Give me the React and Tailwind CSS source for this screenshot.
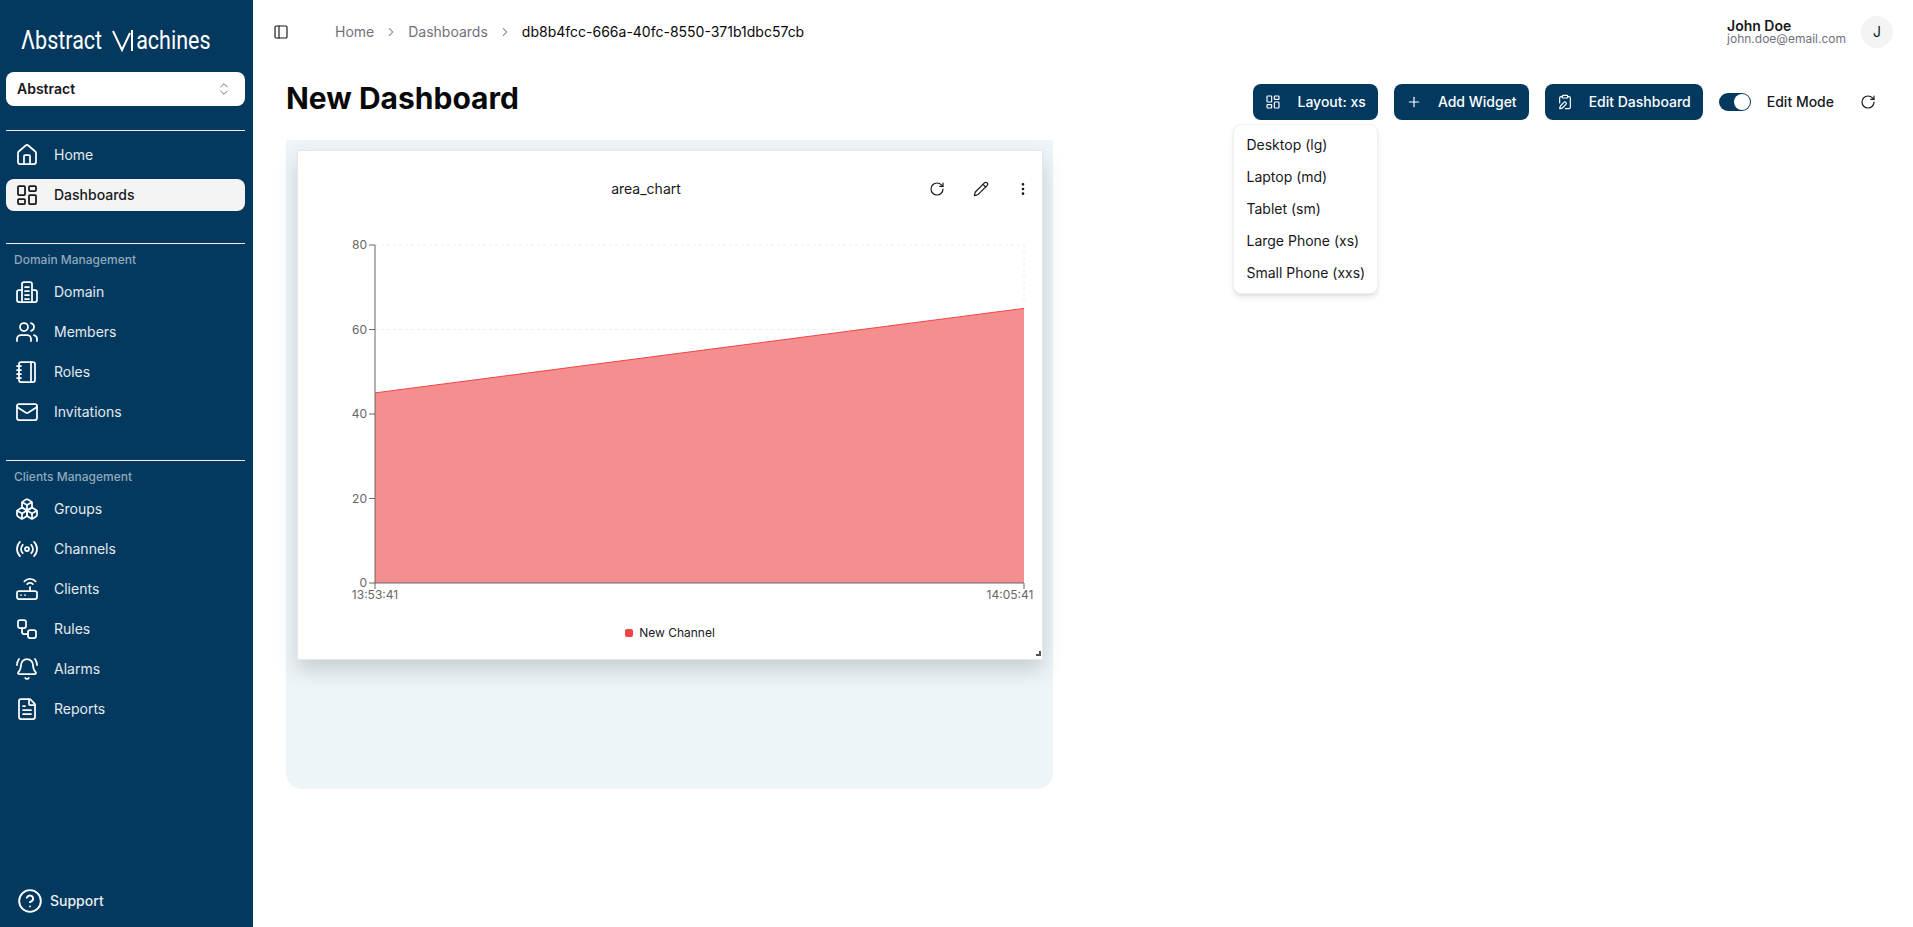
import React from 'react';
import {
  House, LayoutDashboard, Users, Notebook, Mail, Boxes, Radio, Router, Workflow, BellRing, FileText,
  CircleHelp, ChevronsUpDown, ChevronRight, PanelLeft, Plus, ClipboardPen, RotateCw, Pencil, EllipsisVertical,
} from 'lucide-react';

const font = { fontFamily: 'Inter, sans-serif' };

function BuildingIcon(props) {
  return (
    <svg viewBox="0 0 24 24" fill="none" stroke="currentColor" strokeWidth="2" strokeLinecap="round" strokeLinejoin="round" {...props}>
      <path d="M7 22V4a2 2 0 0 1 2-2h6a2 2 0 0 1 2 2v18" />
      <path d="M7 10H4a2 2 0 0 0-2 2v8a2 2 0 0 0 2 2h16a2 2 0 0 0 2-2v-8a2 2 0 0 0-2-2h-3" />
      <path d="M10 7h4M10 11h4M10 15h4M10 19h4" />
    </svg>
  );
}

function NavItem({ icon: Icon, label, active }) {
  return (
    <div className={`flex h-8 items-center gap-[15px] rounded-lg pl-[9px] text-sm ${active ? 'bg-[#f4f4f5] font-medium text-[#18181b]' : 'text-[#e4e9ee]'}`}>
      <Icon className={`h-6 w-6 shrink-0 ${active ? 'text-[#18181b]' : 'text-white'}`} strokeWidth={1.75} />
      <span>{label}</span>
    </div>
  );
}

function NavGroup({ label, items }) {
  return (
    <div className={`mb-8 border-t border-[#e8edf1] ${label ? '' : 'pt-2'}`}>
      {label && <div className="flex h-8 items-center px-2 text-xs font-medium text-[#8fa8bb]">{label}</div>}
      <div className="flex flex-col gap-2">
        {items.map((i) => <NavItem key={i.label} {...i} />)}
      </div>
    </div>
  );
}

function Logo() {
  return (
    <div className="flex h-[72px] items-center pl-[15px] pt-[10px] text-[21.5px] leading-none text-white" style={{ fontFamily: 'Roboto, sans-serif' }}>
      <span className="scale-y-[1.2]">Λbstract</span>
      <svg className="ml-[10px] h-[22px] w-[22px]" viewBox="0 0 22 22" fill="none" stroke="white" strokeWidth="2">
        <path d="M1 1 L10 20 L18 3 M20 0 V21" />
      </svg>
      <span className="ml-[2px] scale-y-[1.2]">achines</span>
    </div>
  );
}

function Sidebar() {
  return (
    <aside className="flex h-[927px] w-[253px] shrink-0 flex-col bg-[#03395f] pl-[6px] pr-[8px]">
      <Logo />
      <div className="mb-6 flex h-[34px] items-center justify-between rounded-lg bg-white pl-[11px] pr-[13px] text-sm font-semibold text-[#18181b]">
        <span>Abstract</span>
        <ChevronsUpDown className="h-4 w-4 text-[#71717a]" strokeWidth={1.5} />
      </div>
      <NavGroup items={[
        { icon: House, label: 'Home' },
        { icon: LayoutDashboard, label: 'Dashboards', active: true },
      ]} />
      <NavGroup label="Domain Management" items={[
        { icon: BuildingIcon, label: 'Domain' },
        { icon: Users, label: 'Members' },
        { icon: Notebook, label: 'Roles' },
        { icon: Mail, label: 'Invitations' },
      ]} />
      <NavGroup label="Clients Management" items={[
        { icon: Boxes, label: 'Groups' },
        { icon: Radio, label: 'Channels' },
        { icon: Router, label: 'Clients' },
        { icon: Workflow, label: 'Rules' },
        { icon: BellRing, label: 'Alarms' },
        { icon: FileText, label: 'Reports' },
      ]} />
      <div className="mt-auto mb-[10px] flex h-8 items-center gap-[7px] pl-[11px] text-sm font-medium text-[#e9eef2]">
        <CircleHelp className="h-[26px] w-[26px] text-white" strokeWidth={1.75} />
        <span>Support</span>
      </div>
    </aside>
  );
}

function TopBar() {
  return (
    <header className="flex h-16 items-center justify-between pl-5 pr-5">
      <div className="flex items-center text-sm">
        <PanelLeft className="h-4 w-4 text-[#18181b]" strokeWidth={1.75} />
        <span className="ml-[46px] text-[#71717a]">Home</span>
        <ChevronRight className="mx-[10px] h-[14px] w-[14px] text-[#71717a]" strokeWidth={1.75} />
        <span className="text-[#71717a]">Dashboards</span>
        <ChevronRight className="mx-[10px] h-[14px] w-[14px] text-[#71717a]" strokeWidth={1.75} />
        <span className="text-[#09090b]">db8b4fcc-666a-40fc-8550-371b1dbc57cb</span>
      </div>
      <div className="flex items-center gap-[15px]">
        <div className="flex flex-col">
          <span className="text-sm font-semibold leading-[14px] text-[#18181b]">John Doe</span>
          <span className="text-xs leading-[12px] text-[#71717a]">john.doe@email.com</span>
        </div>
        <div className="flex h-8 w-8 items-center justify-center rounded-full bg-[#f4f4f5] text-sm text-[#18181b]">J</div>
      </div>
    </header>
  );
}

function ActionButton({ icon: Icon, children }) {
  return (
    <button className="flex h-9 items-center gap-4 rounded-lg bg-[#03395f] px-3 text-sm font-medium text-white">
      <Icon className="h-4 w-4" strokeWidth={1.75} />
      {children}
    </button>
  );
}

function LayoutMenu() {
  const items = ['Desktop (lg)', 'Laptop (md)', 'Tablet (sm)', 'Large Phone (xs)', 'Small Phone (xxs)'];
  return (
    <div className="absolute left-[-20px] top-[40px] z-10 w-[145px] rounded-lg border border-[#f0f0f0] bg-white py-1 shadow-md">
      {items.map((i) => (
        <div key={i} className="flex h-8 items-center whitespace-nowrap pl-[12px] text-sm text-[#18181b]">{i}</div>
      ))}
    </div>
  );
}

function Toolbar() {
  return (
    <div className="flex items-center gap-4 pt-1">
      <div className="relative">
        <ActionButton icon={LayoutDashboard}>Layout: xs</ActionButton>
        <LayoutMenu />
      </div>
      <ActionButton icon={Plus}>Add Widget</ActionButton>
      <ActionButton icon={ClipboardPen}>Edit Dashboard</ActionButton>
      <div className="flex h-[18px] w-8 items-center justify-end rounded-full bg-[#03395f] p-[1px]">
        <div className="h-4 w-4 rounded-full bg-white" />
      </div>
      <span className="text-sm font-medium text-[#18181b]">Edit Mode</span>
      <RotateCw className="ml-[10px] h-4 w-4 text-[#18181b]" strokeWidth={1.75} />
    </div>
  );
}

// chart coords are relative to the card, x0/x1 are the axis ends
function AreaChart() {
  const x0 = 77;
  const x1 = 726;
  const yFor = (v) => 348 - v * 4.225;
  const ticks = [0, 20, 40, 60, 80];
  return (
    <svg width="744" height="375" className="block" style={font}>
      {ticks.slice(1).map((t) => (
        <line key={t} x1={x0} x2={x1} y1={yFor(t)} y2={yFor(t)} stroke="#eeeeee" strokeDasharray="3 3" />
      ))}
      <line x1={x1} x2={x1} y1={yFor(80)} y2={yFor(65)} stroke="#eeeeee" strokeDasharray="3 3" />
      <polygon points={`${x0},${yFor(45)} ${x1},${yFor(65)} ${x1},${yFor(0)} ${x0},${yFor(0)}`} fill="#f58f8f" />
      <line x1={x0} y1={yFor(45)} x2={x1} y2={yFor(65)} stroke="#ef4444" />
      <line x1={x0} x2={x0} y1={yFor(80)} y2={yFor(0)} stroke="#666" />
      <line x1={x0} x2={x1} y1={yFor(0)} y2={yFor(0)} stroke="#666" />
      {ticks.map((t) => (
        <g key={t}>
          <line x1={x0 - 6} x2={x0} y1={yFor(t)} y2={yFor(t)} stroke="#666" />
          <text x={x0 - 8} y={yFor(t) + 4} textAnchor="end" fontSize="12" fill="#666">{t}</text>
        </g>
      ))}
      <line x1={x0} x2={x0} y1={348} y2={354} stroke="#666" />
      <line x1={x1} x2={x1} y1={348} y2={354} stroke="#666" />
      <text x={x0} y={364} textAnchor="middle" fontSize="12" fill="#666">13:53:41</text>
      <text x={x1 - 14} y={364} textAnchor="middle" fontSize="12" fill="#666">14:05:41</text>
    </svg>
  );
}

function ChartCard() {
  return (
    <div className="relative h-[510px] w-[746px] border border-[#e5e7eb] bg-white shadow-[0_10px_20px_rgba(0,0,0,0.16)]">
      <div className="relative flex h-[84px] items-center justify-center pb-[8px] pr-[48px]">
        <span className="text-sm text-[#18181b]">area_chart</span>
        <RotateCw className="absolute left-[631px] top-[30px] h-4 w-4 text-[#18181b]" strokeWidth={1.75} />
        <Pencil className="absolute left-[675px] top-[30px] h-4 w-4 text-[#18181b]" strokeWidth={1.75} />
        <EllipsisVertical className="absolute left-[717px] top-[30px] h-4 w-4 text-[#18181b]" strokeWidth={2} />
      </div>
      <AreaChart />
      <div className="mt-[15px] flex h-4 items-center justify-center gap-[6px] text-xs text-[#18181b]">
        <span className="h-2 w-2 rounded-[2px] bg-[#ef4444]" />
        <span>New Channel</span>
      </div>
      <div className="absolute bottom-[3px] right-[1px] h-[5px] w-[5px] border-b-2 border-r-2 border-[#555]" />
    </div>
  );
}

export default function App() {
  return (
    <div className="flex h-[927px] w-full overflow-hidden bg-white" style={font}>
      <Sidebar />
      <main className="min-w-0 flex-1">
        <TopBar />
        <div className="pl-[33px] pr-[37px]">
          <div className="mb-5 flex h-14 items-start justify-between pt-4">
            <h1 className="text-3xl font-bold text-[#09090b]">New Dashboard</h1>
            <Toolbar />
          </div>
          <div className="h-[649px] w-[767px] rounded-b-2xl bg-[#edf5f8] pl-[11px] pt-[10px]">
            <ChartCard />
          </div>
        </div>
      </main>
    </div>
  );
}
